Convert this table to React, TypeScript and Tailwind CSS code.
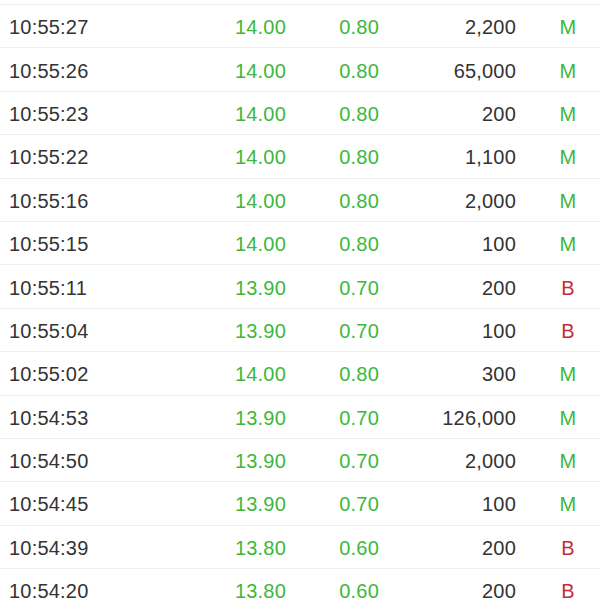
const trades = [
  { time: '10:55:27', price: '14.00', change: '0.80', volume: '2,200', side: 'M' },
  { time: '10:55:26', price: '14.00', change: '0.80', volume: '65,000', side: 'M' },
  { time: '10:55:23', price: '14.00', change: '0.80', volume: '200', side: 'M' },
  { time: '10:55:22', price: '14.00', change: '0.80', volume: '1,100', side: 'M' },
  { time: '10:55:16', price: '14.00', change: '0.80', volume: '2,000', side: 'M' },
  { time: '10:55:15', price: '14.00', change: '0.80', volume: '100', side: 'M' },
  { time: '10:55:11', price: '13.90', change: '0.70', volume: '200', side: 'B' },
  { time: '10:55:04', price: '13.90', change: '0.70', volume: '100', side: 'B' },
  { time: '10:55:02', price: '14.00', change: '0.80', volume: '300', side: 'M' },
  { time: '10:54:53', price: '13.90', change: '0.70', volume: '126,000', side: 'M' },
  { time: '10:54:50', price: '13.90', change: '0.70', volume: '2,000', side: 'M' },
  { time: '10:54:45', price: '13.90', change: '0.70', volume: '100', side: 'M' },
  { time: '10:54:39', price: '13.80', change: '0.60', volume: '200', side: 'B' },
  { time: '10:54:20', price: '13.80', change: '0.60', volume: '200', side: 'B' },
];

export default function App() {
  return (
    <div className="w-[600px] h-[600px] overflow-hidden bg-white font-['Liberation_Sans',Arial,sans-serif] text-[20px] leading-[16px] tracking-[0.2px]">
      {/* tail of the row scrolled off above */}
      <div className="h-[5px] border-b-[1.5px] border-[#efefef]" />
      {trades.map((t) => (
        <div
          key={t.time}
          className="h-[43.4px] pt-[2px] flex items-center border-b-[1.5px] border-[#efefef]"
        >
          <span className="w-[200px] shrink-0 pl-[9px] text-[#333333]">{t.time}</span>
          <span className="w-[86px] shrink-0 text-right text-[#3cb83c]">{t.price}</span>
          <span className="w-[93px] shrink-0 text-right text-[#3cb83c]">{t.change}</span>
          <span className="w-[137px] shrink-0 text-right text-[#333333]">{t.volume}</span>
          <span
            className={
              'w-[84px] shrink-0 pl-[20px] text-center ' +
              (t.side === 'M' ? 'text-[#3cb83c]' : 'text-[#c42d38]')
            }
          >
            {t.side}
          </span>
        </div>
      ))}
    </div>
  );
}
